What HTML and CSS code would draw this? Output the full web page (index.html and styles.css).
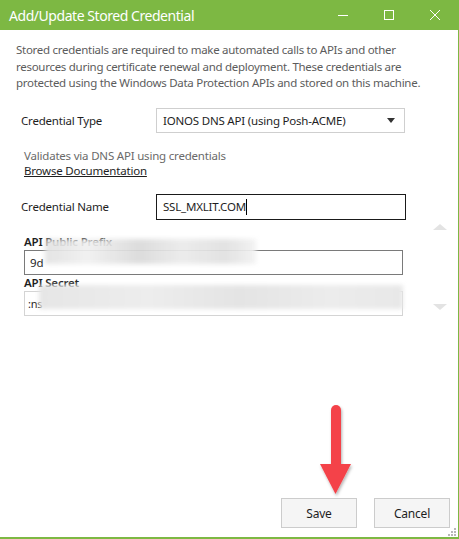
FILE: index.html
```html
<!DOCTYPE html>
<html lang="en">

<head>
    <meta charset="UTF-8" />
    <title>Add/Update Stored Credential</title>
    <link rel="stylesheet" href="styles.css">
</head>

<body>
    <div class="window">
        <header class="titlebar">
            <span class="title">Add/Update Stored Credential</span>
            <div class="controls">
                <svg class="ctl" width="12" height="12" viewBox="0 0 12 12"><path d="M1 6.5h10" stroke="#fff" stroke-width="1" /></svg>
                <svg class="ctl" width="12" height="12" viewBox="0 0 12 12"><rect x="1.5" y="1.5" width="9" height="9" fill="none" stroke="#fff" stroke-width="1" /></svg>
                <svg class="ctl" width="12" height="12" viewBox="0 0 12 12"><path d="M1 1l10 10M11 1L1 11" stroke="#fff" stroke-width="1" /></svg>
            </div>
        </header>

        <main class="content">
            <p class="intro">Stored credentials are required to make automated calls to APIs and other resources during certificate renewal and deployment. These credentials are protected using the Windows Data Protection APIs and stored on this machine.</p>

            <div class="row">
                <label>Credential Type</label>
                <div class="select">
                    <span>IONOS DNS API (using Posh-ACME)</span>
                    <svg width="8" height="5" viewBox="0 0 8 5"><path d="M0 0h8L4 5z" fill="#333" /></svg>
                </div>
            </div>

            <div class="provider">
                <div class="hint">Validates via DNS API using credentials</div>
                <a class="doclink">Browse Documentation</a>
            </div>

            <div class="row">
                <label>Credential Name</label>
                <div class="textbox focused">SSL_MXLIT.COM<span class="caret"></span></div>
            </div>

            <div class="params">
                <div class="fields">
                    <div class="param-label">API Public Prefix</div>
                    <div class="textbox wide">9d</div>
                    <div class="param-label">API Secret</div>
                    <div class="textbox wide soft">:ns</div>
                    <div class="smudge smudge-a"></div>
                    <div class="smudge smudge-b"></div>
                </div>
                <div class="scroll">
                    <svg width="14" height="6" viewBox="0 0 14 6"><path d="M0 6h14L7 0z" fill="#e3e3e3" /></svg>
                    <svg width="14" height="6" viewBox="0 0 14 6"><path d="M0 0h14L7 6z" fill="#e3e3e3" /></svg>
                </div>
            </div>

            <footer class="buttons">
                <button>Save</button>
                <button>Cancel</button>
            </footer>

            <svg class="pointer" width="44" height="100" viewBox="0 0 44 100">
                <defs>
                    <filter id="shade" x="-30%" y="-10%" width="160%" height="130%">
                        <feDropShadow dx="1" dy="2" stdDeviation="1.5" flood-color="#000" flood-opacity="0.3" />
                    </filter>
                </defs>
                <g filter="url(#shade)">
                    <path d="M18 10a5 5 0 0 1 10 0v56h-10z" fill="#f4434a" />
                    <path d="M7 64h31L22.5 94z" fill="#f4434a" />
                </g>
            </svg>

            <svg class="grip" width="8" height="8" viewBox="0 0 8 8" fill="#b8b8b8">
                <rect x="6" y="0" width="2" height="2" />
                <rect x="3" y="3" width="2" height="2" />
                <rect x="6" y="3" width="2" height="2" />
                <rect x="0" y="6" width="2" height="2" />
                <rect x="3" y="6" width="2" height="2" />
                <rect x="6" y="6" width="2" height="2" />
            </svg>
        </main>
    </div>
</body>

</html>
```

FILE: styles.css
```css
:root {
    --accent: #7db843;
    --text: #1e1e1e;
    --muted: #5c5c5c;
}

* {
    margin: 0;
    padding: 0;
    box-sizing: border-box;
}

body {
    font-family: 'Noto Sans', 'Open Sans', sans-serif;
    font-size: 11.5px;
    letter-spacing: -0.2px;
    color: var(--text);
    background: #ffffff;
}

.window {
    width: 459px;
    height: 539px;
    display: flex;
    flex-direction: column;
    border-right: 1px solid var(--accent);
    border-bottom: 2px solid var(--accent);
}

.titlebar {
    height: 30px;
    flex-shrink: 0;
    background: var(--accent);
    color: #ffffff;
    display: flex;
    align-items: center;
    padding-left: 9px;
}

.title {
    font-size: 14px;
    letter-spacing: -0.45px;
}

.controls {
    margin-left: auto;
    display: flex;
    gap: 34px;
    padding-right: 17px;
}

.content {
    position: relative;
    flex: 1;
    display: flex;
    flex-direction: column;
    padding: 12px 8px 8px 16px;
}

.intro {
    color: var(--muted);
    line-height: 16.5px;
    letter-spacing: -0.28px;
    width: 430px;
}

.row {
    display: flex;
    align-items: center;
    padding-left: 5px;
    margin-top: 16px;
}

.row label {
    width: 135px;
}

.select {
    width: 249px;
    height: 25px;
    border: 1px solid #cfcfcf;
    display: flex;
    align-items: center;
    justify-content: space-between;
    padding: 0 9px 0 6px;
}

.provider {
    padding-left: 8px;
    margin-top: 15px;
    line-height: 15px;
}

.hint {
    color: #6a6a6a;
}

.doclink {
    color: var(--text);
    text-decoration: underline;
}

.textbox {
    height: 26px;
    border: 1px solid #7a7a7a;
    display: flex;
    align-items: center;
    padding-left: 6px;
}

.textbox.focused {
    width: 250px;
    border-color: #1a1a1a;
}

.caret {
    width: 1px;
    height: 16px;
    background: #000;
}

.params {
    display: flex;
    padding-left: 8px;
    margin-top: 14px;
}

.fields {
    position: relative;
    width: 379px;
}

.param-label {
    font-weight: 600;
    line-height: 16px;
}

.textbox.wide {
    height: 25px;
    padding-left: 5px;
}

.textbox.soft {
    border-color: #d4d4d4;
    padding-left: 3px;
    font-size: 11px;
}

.smudge {
    position: absolute;
    filter: blur(2px);
}

.smudge-a {
    left: 21px;
    top: 5px;
    width: 211px;
    height: 25px;
    opacity: 0.92;
    background: linear-gradient(90deg, #e2e2e2 0%, #f0f0f0 20%, #dadada 45%, #ebebeb 65%, #e0e0e0 85%, #f2f2f2 100%);
}

.smudge-b {
    left: 15px;
    top: 51px;
    width: 364px;
    height: 24px;
    background: linear-gradient(90deg, #e6e6e6 0%, #ededed 30%, #e4e4e4 55%, #ececec 80%, #e8e8e8 100%);
}

.scroll {
    margin-left: 30px;
    display: flex;
    flex-direction: column;
    justify-content: space-between;
    height: 86px;
    margin-top: -10px;
}

.buttons {
    margin-top: auto;
    display: flex;
    justify-content: flex-end;
    gap: 17px;
    margin-bottom: 1px;
}

.buttons button {
    width: 76px;
    height: 30px;
    background: #f5f5f5;
    border: 1px solid #cccccc;
    font-family: inherit;
    font-size: 12px;
    letter-spacing: -0.2px;
    color: var(--text);
}

.pointer {
    position: absolute;
    left: 313px;
    top: 370px;
}

.grip {
    position: absolute;
    right: 2px;
    bottom: 1px;
}
```
